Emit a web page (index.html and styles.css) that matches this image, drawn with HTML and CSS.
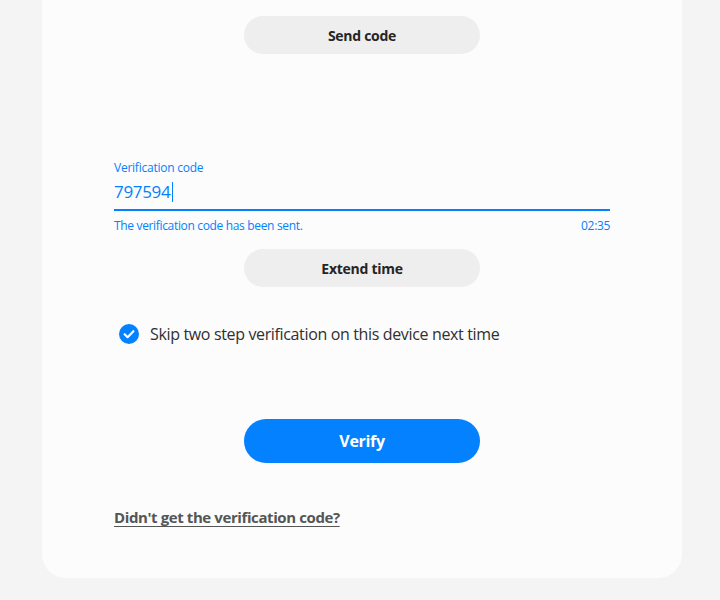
FILE: index.html
```html
<!DOCTYPE html>
<html>
<head>
<meta charset="utf-8">
<link rel="stylesheet" href="styles.css">
</head>
<body>
<main class="card">
  <div class="btn-row"><button class="btn btn-gray btn-send">Send code</button></div>
  <div class="field">
    <label class="field-label">Verification code</label>
    <div class="field-value">797594<span class="caret"></span></div>
    <div class="field-line"></div>
    <div class="field-help"><span>The verification code has been sent.</span><span>02:35</span></div>
  </div>
  <div class="btn-row"><button class="btn btn-gray btn-extend">Extend time</button></div>
  <div class="check-row">
    <span class="check">
      <svg width="20" height="20" viewBox="0 0 20 20"><circle cx="10" cy="10" r="10" fill="#0381fe"/><path d="M5.6 10.2l3 3 5.8-6" fill="none" stroke="#fff" stroke-width="2.2" stroke-linecap="round" stroke-linejoin="round"/></svg>
    </span>
    <span class="check-text">Skip two step verification on this device next time</span>
  </div>
  <div class="btn-row"><button class="btn btn-blue">Verify</button></div>
  <a class="help-link" href="#">Didn't get the verification code?</a>
</main>
</body>
</html>
```
FILE: styles.css
```css
html, body { margin: 0; padding: 0; }
body {
  background: #f4f4f4;
  font-family: "Open Sans", "Noto Sans", sans-serif;
  color: #252525;
  height: 600px;
  overflow: hidden;
  letter-spacing: -0.025em;
}
.card {
  width: 640px;
  margin-left: 42px;
  box-sizing: border-box;
  padding: 16px 72px 50px;
  background: #fcfcfc;
  border-radius: 0 0 24px 24px;
  height: 578px;
}
.btn-row { display: flex; justify-content: center; }
.btn {
  width: 236px;
  border: none;
  border-radius: 20px;
  font-family: inherit;
  font-weight: 700;
  letter-spacing: -0.02em;
  cursor: pointer;
}
.btn-gray {
  height: 38px;
  background: #eeeeee;
  color: #252525;
  font-size: 14px;
}
.btn-blue {
  height: 44px;
  border-radius: 22px;
  background: #0381fe;
  color: #fff;
  font-size: 16px;
}
.field { margin-top: 106px; }
.field-label {
  display: block;
  font-size: 12px;
  line-height: 16px;
  color: #0381fe;
  letter-spacing: -0.02em;
}
.field-value {
  margin-top: 5px;
  font-size: 17px;
  line-height: 22px;
  color: #0381fe;
  display: flex;
  align-items: center;
  letter-spacing: -0.02em;
}
.caret {
  display: inline-block;
  width: 1px;
  height: 20px;
  background: #0381fe;
  margin-left: 2px;
}
.field-line {
  margin-top: 6px;
  height: 2px;
  background: #0381fe;
}
.field-help {
  display: flex;
  justify-content: space-between;
  margin-top: 7px;
  font-size: 12px;
  line-height: 16px;
  color: #0381fe;
  letter-spacing: -0.028em;
}
.field + .btn-row { margin-top: 15px; }
.check-row {
  display: flex;
  align-items: center;
  margin-top: 36px;
  padding-left: 5px;
  height: 22px;
}
.check { display: flex; width: 20px; height: 20px; }
.check-text {
  margin-left: 11px;
  font-size: 16px;
  color: #303030;
  letter-spacing: -0.022em;
}
.check-row + .btn-row { margin-top: 74px; }
.help-link {
  display: inline-block;
  margin-top: 44px;
  font-size: 15px;
  font-weight: 700;
  color: #555;
  text-decoration: underline;
  text-decoration-skip-ink: none;
  text-underline-offset: 3px;
}
```
